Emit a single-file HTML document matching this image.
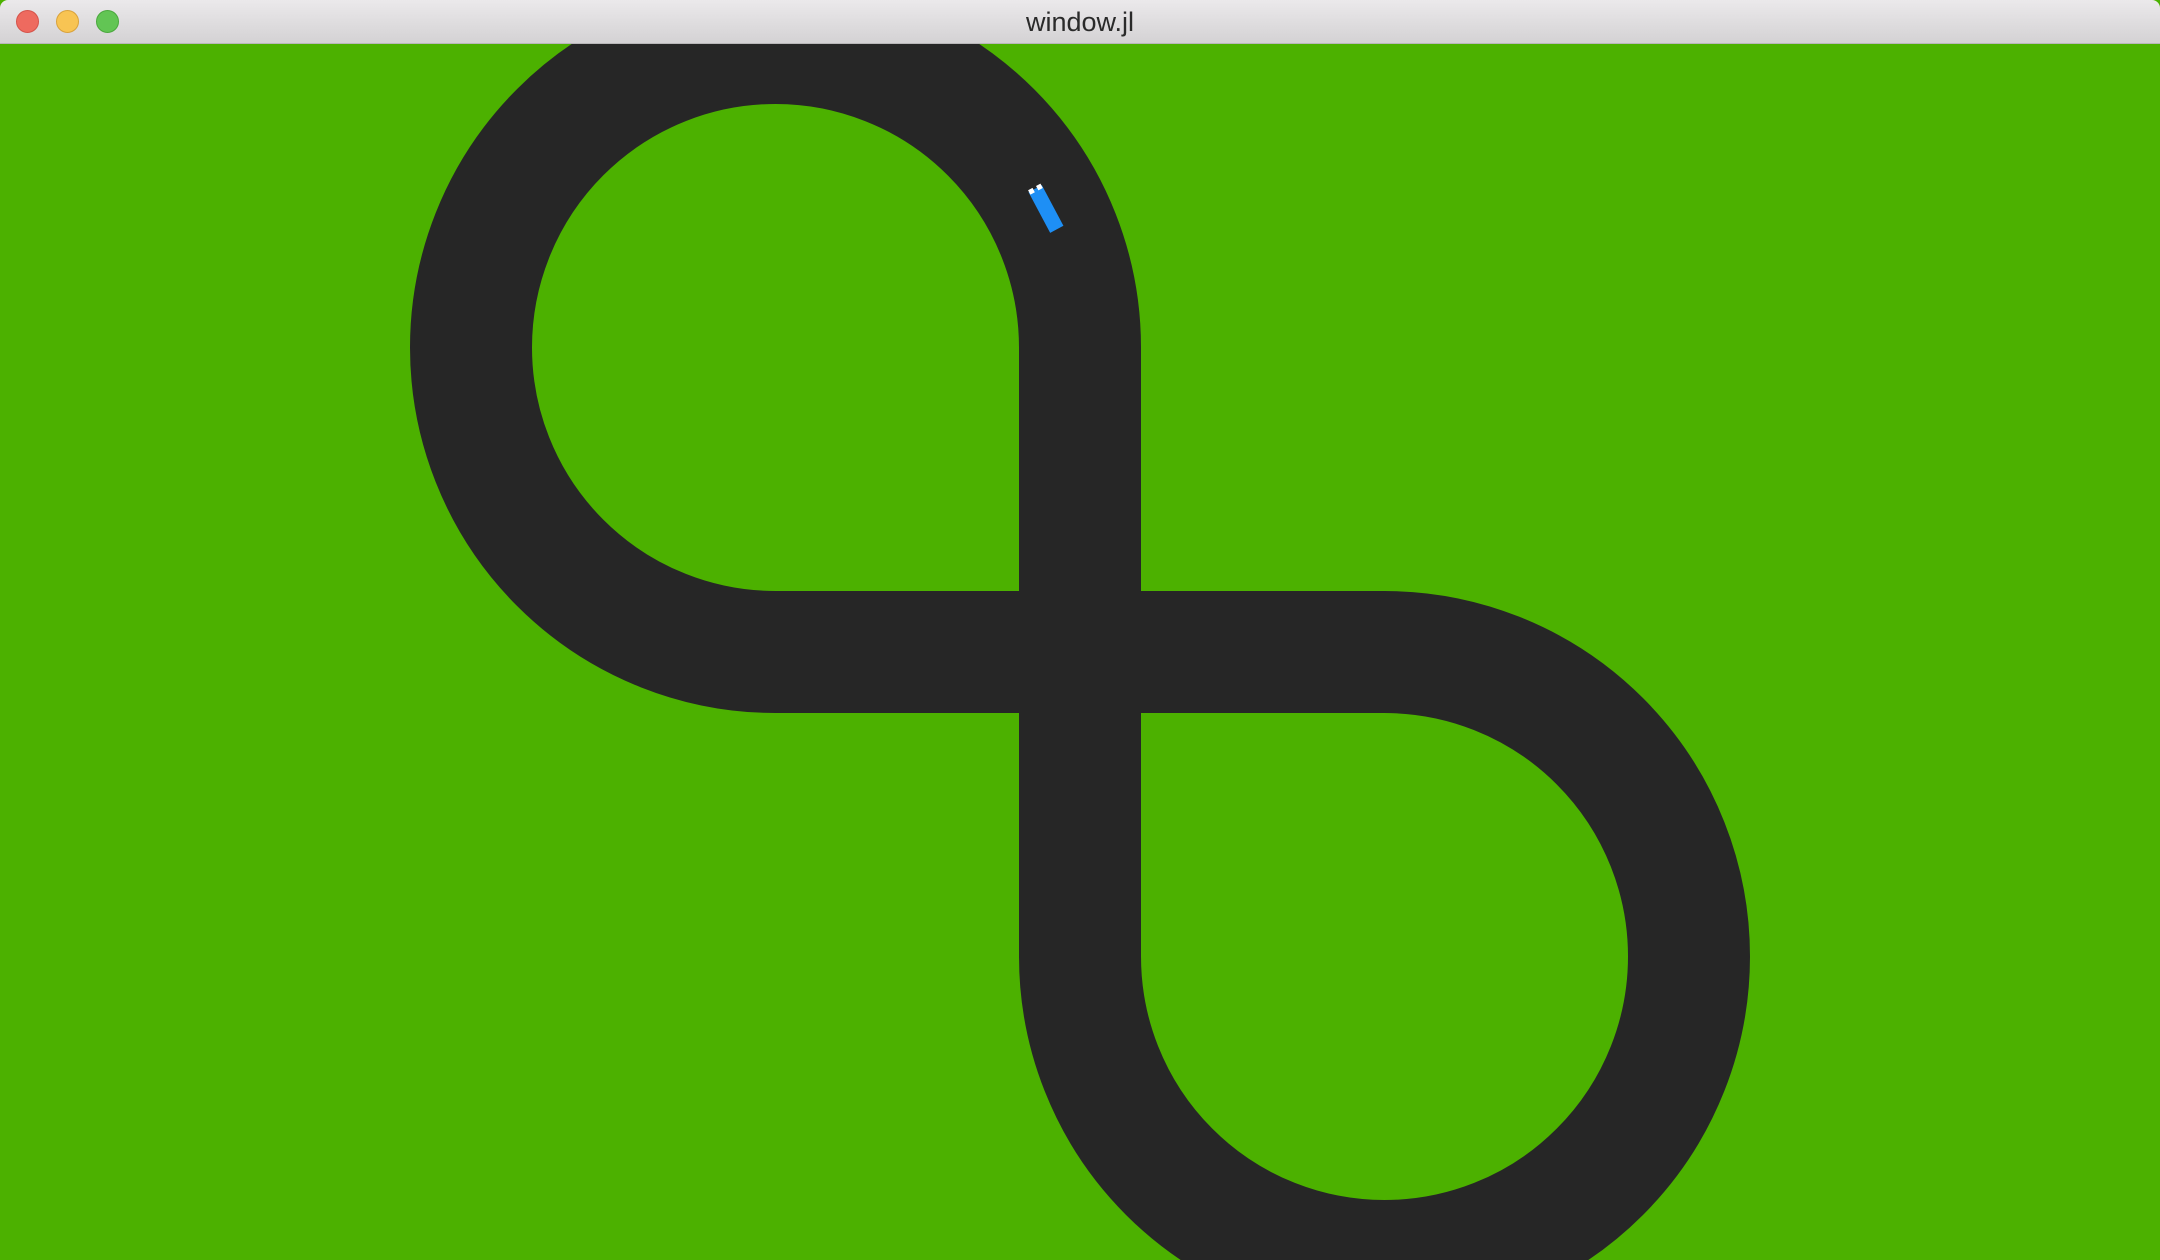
<!DOCTYPE html>
<html><head><meta charset="utf-8"><style>
html,body{margin:0;padding:0;width:2160px;height:1260px;overflow:hidden;background:#4cb100}
.bar{position:absolute;left:0;top:0;width:2160px;height:44px;background:linear-gradient(#ebe9eb,#d4d2d4);border-bottom:1px solid #b9b7b9;box-sizing:border-box;border-radius:8px 8px 0 0}
.t{position:absolute;left:0;right:0;top:7px;text-align:center;font:27px "Liberation Sans",sans-serif;color:#2a2a2a}
.d{position:absolute;top:10px;width:23px;height:23px;border-radius:50%;box-sizing:border-box}
</style></head><body>
<svg width="2160" height="1260" style="position:absolute;left:0;top:0">
<rect width="2160" height="1260" fill="#4cb100"/>
<path d="M1080,958 L1080,348 A304.5,304.5 0 1 0 775.5,652 L1384.5,652 A304.5,304.5 0 1 1 1080,956.5" fill="none" stroke="#262626" stroke-width="122"/>
<g transform="translate(1046,209) rotate(-28)">
<rect x="-7.5" y="-23" width="15" height="46" fill="#1e8ff5"/>
<rect x="-7" y="-25" width="5" height="5" fill="#fff"/>
<rect x="2" y="-25" width="5" height="5" fill="#fff"/>
</g>
</svg>
<div class="bar"><div class="t">window.jl</div>
<div class="d" style="left:16px;background:#ee6a5f;border:1px solid #d5534a"></div>
<div class="d" style="left:56px;background:#f8c453;border:1px solid #d9a23b"></div>
<div class="d" style="left:96px;background:#62c554;border:1px solid #4aa83d"></div>
</div>
</body></html>
